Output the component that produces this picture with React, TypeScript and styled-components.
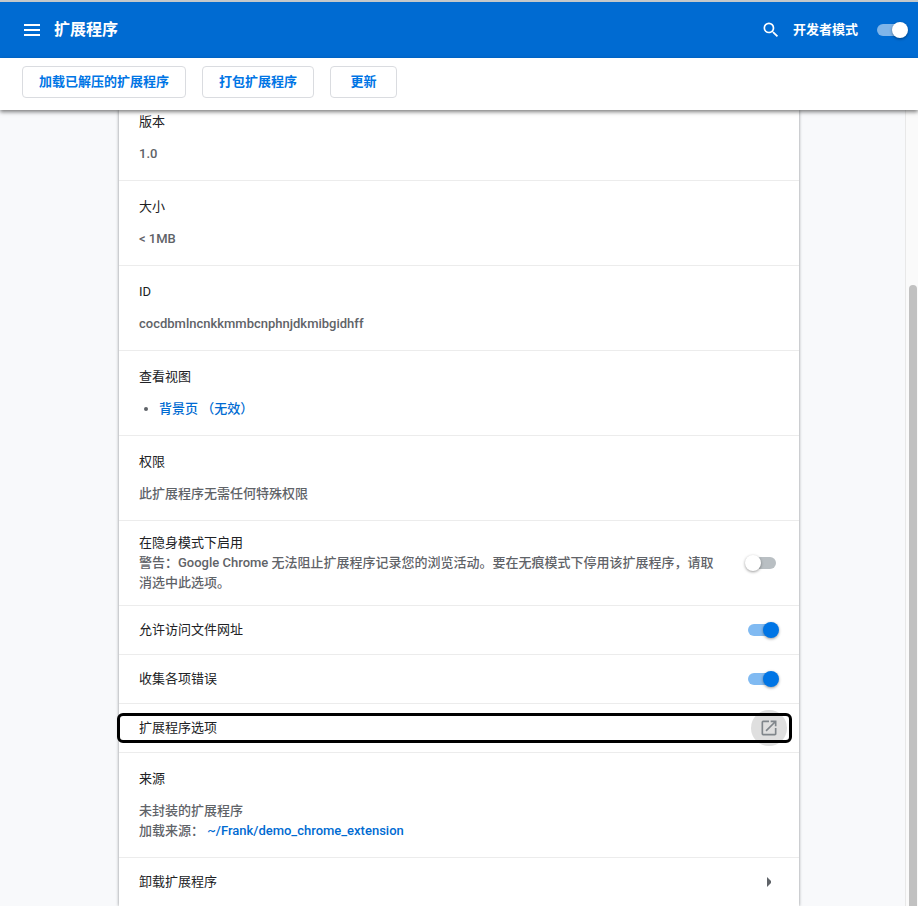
import React from "react";
import styled, { createGlobalStyle } from "styled-components";

const GlobalStyle = createGlobalStyle`
  *, *::before, *::after { box-sizing: border-box; }
  body {
    margin: 0;
    background: #f8f9fb;
    color: #202124;
    font-family: Roboto, "Noto Sans CJK SC", sans-serif;
    font-size: 13px;
    line-height: 20px;
  }
`;

const Page = styled.div`
  min-height: 100vh;
  display: flex;
  flex-direction: column;
`;

const Header = styled.header`
  display: flex;
  align-items: center;
  height: 58px;
  padding: 0 10px 0 24px;
  border-top: 2px solid #c4c8ca;
  background: #006bd2;
  color: #fff;
`;

const IconButton = styled.button`
  display: flex;
  padding: 0;
  border: 0;
  background: none;
  color: inherit;
  cursor: pointer;
`;

const Title = styled.h1`
  flex: 1;
  margin: 0 0 0 14px;
  font-size: 16px;
  font-weight: 700;
  line-height: 24px;
`;

const DevMode = styled.label`
  display: flex;
  align-items: center;
  gap: 16px;
  margin-left: 12px;
  font-weight: 700;
`;

const Switch = styled.input.attrs({ type: "checkbox" })<{ $light?: boolean }>`
  appearance: none;
  flex: none;
  display: grid;
  align-items: center;
  width: 34px;
  height: 16px;
  margin: 0;
  cursor: pointer;

  &::before,
  &::after {
    content: "";
    grid-area: 1 / 1;
  }
  &::before {
    justify-self: center;
    width: 28px;
    height: 12px;
    border-radius: 6px;
    background: #b9bfc3;
  }
  &::after {
    justify-self: start;
    width: 16px;
    height: 16px;
    border-radius: 50%;
    background: #fff;
    box-shadow: 0 1px 3px rgba(0, 0, 0, 0.4);
  }
  &:checked::before {
    background: ${(p) => (p.$light ? "#80b5e9" : "#80baf2")};
  }
  &:checked::after {
    justify-self: end;
    background: ${(p) => (p.$light ? "#fff" : "#0075e5")};
  }
`;

const Toolbar = styled.div`
  position: relative;
  z-index: 1;
  display: flex;
  flex-wrap: wrap;
  gap: 16px;
  padding: 8px 22px 12px;
  background: #fff;
  box-shadow: 0 2px 4px rgba(0, 0, 0, 0.5);
`;

const ActionButton = styled.button`
  min-width: 67px;
  height: 32px;
  padding: 0 16px;
  border: 1px solid #dadce0;
  border-radius: 4px;
  background: #fff;
  color: #0075e5;
  font: inherit;
  font-weight: 700;
  cursor: pointer;
`;

const Content = styled.div`
  flex: 1;
  display: grid;
  grid-template-columns: 1fr minmax(0, 680px) 1fr;
`;

const Card = styled.main`
  grid-column: 2;
  background: #fff;
  box-shadow: 0 0 3px rgba(60, 64, 67, 0.6);

  & > * + * {
    border-top: 1px solid #ececec;
  }
`;

const Section = styled.section<{ $clipped?: boolean }>`
  padding: ${(p) => (p.$clipped ? "2px" : "16px")} 20px 16px;
`;

const Row = styled.div<{ $roomy?: boolean }>`
  display: flex;
  align-items: center;
  justify-content: space-between;
  gap: 24px;
  min-height: 49px;
  padding: ${(p) => (p.$roomy ? "12px" : "0")} 20px;
`;

const Label = styled.div`
  color: #202124;
`;

const Value = styled.div<{ $spaced?: boolean }>`
  margin-top: ${(p) => (p.$spaced ? "12px" : "0")};
  color: #5f6368;
  font-weight: 500;
`;

const ViewList = styled.ul`
  margin: 12px 0 0;
  padding-left: 20px;
  color: #5f6368;
`;

const Link = styled.a`
  color: #006bd2;
  font-weight: 500;
  text-decoration: none;
`;

const OptionsRow = styled.div`
  display: flex;
  align-items: center;
  height: 49px;
  padding: 0 10px 0 1px;
`;

const OptionsButton = styled.button`
  flex: 1;
  display: flex;
  align-items: center;
  justify-content: space-between;
  height: 24px;
  padding: 0 2px 0 19px;
  border: 0;
  border-radius: 3px;
  outline: 3px solid #000;
  background: none;
  color: #202124;
  font: inherit;
  cursor: pointer;
`;

const Ripple = styled.span`
  display: flex;
  align-items: center;
  justify-content: center;
  width: 36px;
  height: 36px;
  margin: -6px 0;
  border-radius: 50%;
  background: #dfdfdf;
  color: #80868b;
`;

const RemoveButton = styled.button`
  display: flex;
  align-items: center;
  justify-content: space-between;
  width: 100%;
  height: 48px;
  padding: 0 28px 0 20px;
  border: 0;
  background: none;
  color: #202124;
  font: inherit;
  cursor: pointer;
`;

const Scrollbar = styled.div`
  justify-self: end;
  display: flex;
  justify-content: flex-end;
  width: 13px;
  padding: 175px 1px 0 0;
  border-left: 1px solid #e8e8e8;
  background: #fafafa;
`;

const Thumb = styled.div`
  width: 8px;
  border-radius: 4px 4px 0 0;
  background: #c1c1c1;
`;

const details = [
  { label: "版本", value: "1.0" },
  { label: "大小", value: "< 1MB" },
  { label: "ID", value: "cocdbmlncnkkmmbcnphnjdkmibgidhff" },
];

export default function App() {
  return (
    <Page>
      <GlobalStyle />
      <Header>
        <IconButton aria-label="主菜单">
          <svg width="16" height="12" viewBox="0 0 16 12" fill="currentColor">
            <path d="M0 0h16v2H0zM0 5h16v2H0zM0 10h16v2H0z" />
          </svg>
        </IconButton>
        <Title>扩展程序</Title>
        <IconButton aria-label="搜索">
          <svg width="20" height="20" viewBox="0 0 24 24" fill="currentColor">
            <path d="M15.5 14h-.79l-.28-.27A6.471 6.471 0 0 0 16 9.5 6.5 6.5 0 1 0 9.5 16c1.61 0 3.09-.59 4.23-1.57l.27.28v.79l5 4.99L20.49 19l-4.99-5zm-6 0C7.01 14 5 11.99 5 9.5S7.01 5 9.5 5 14 7.01 14 9.5 11.99 14 9.5 14z" />
          </svg>
        </IconButton>
        <DevMode>
          开发者模式
          <Switch $light defaultChecked />
        </DevMode>
      </Header>
      <Toolbar>
        <ActionButton>加载已解压的扩展程序</ActionButton>
        <ActionButton>打包扩展程序</ActionButton>
        <ActionButton>更新</ActionButton>
      </Toolbar>
      <Content>
        <Card>
          {details.map((d, i) => (
            <Section key={d.label} $clipped={i === 0}>
              <Label>{d.label}</Label>
              <Value $spaced>{d.value}</Value>
            </Section>
          ))}
          <Section>
            <Label>查看视图</Label>
            <ViewList>
              <li>
                <Link href="#background">背景页 （无效）</Link>
              </li>
            </ViewList>
          </Section>
          <Section>
            <Label>权限</Label>
            <Value $spaced>此扩展程序无需任何特殊权限</Value>
          </Section>
          <Row $roomy>
            <div>
              <Label as="label" htmlFor="incognito">在隐身模式下启用</Label>
              <Value>
                警告：Google Chrome 无法阻止扩展程序记录您的浏览活动。要在无痕模式下停用该扩展程序，请取消选中此选项。
              </Value>
            </div>
            <Switch id="incognito" />
          </Row>
          <Row>
            <Label as="label" htmlFor="file-access">允许访问文件网址</Label>
            <Switch id="file-access" defaultChecked />
          </Row>
          <Row>
            <Label as="label" htmlFor="collect-errors">收集各项错误</Label>
            <Switch id="collect-errors" defaultChecked />
          </Row>
          <OptionsRow>
            <OptionsButton>
              扩展程序选项
              <Ripple>
                <svg width="20" height="20" viewBox="0 0 24 24" fill="currentColor">
                  <path d="M19 19H5V5h7V3H5a2 2 0 0 0-2 2v14a2 2 0 0 0 2 2h14c1.1 0 2-.9 2-2v-7h-2v7zM14 3v2h3.59l-9.83 9.83 1.41 1.41L19 6.41V10h2V3h-7z" />
                </svg>
              </Ripple>
            </OptionsButton>
          </OptionsRow>
          <Section>
            <Label>来源</Label>
            <Value $spaced>
              未封装的扩展程序
              <br />
              加载来源： <Link href="#source">~/Frank/demo_chrome_extension</Link>
            </Value>
          </Section>
          <div>
            <RemoveButton>
              卸载扩展程序
              <svg width="4" height="10" viewBox="0 0 4 10" fill="#5f6368">
                <path d="M0 0l4 4v2l-4 4z" />
              </svg>
            </RemoveButton>
          </div>
        </Card>
        <Scrollbar aria-hidden="true">
          <Thumb />
        </Scrollbar>
      </Content>
    </Page>
  );
}
